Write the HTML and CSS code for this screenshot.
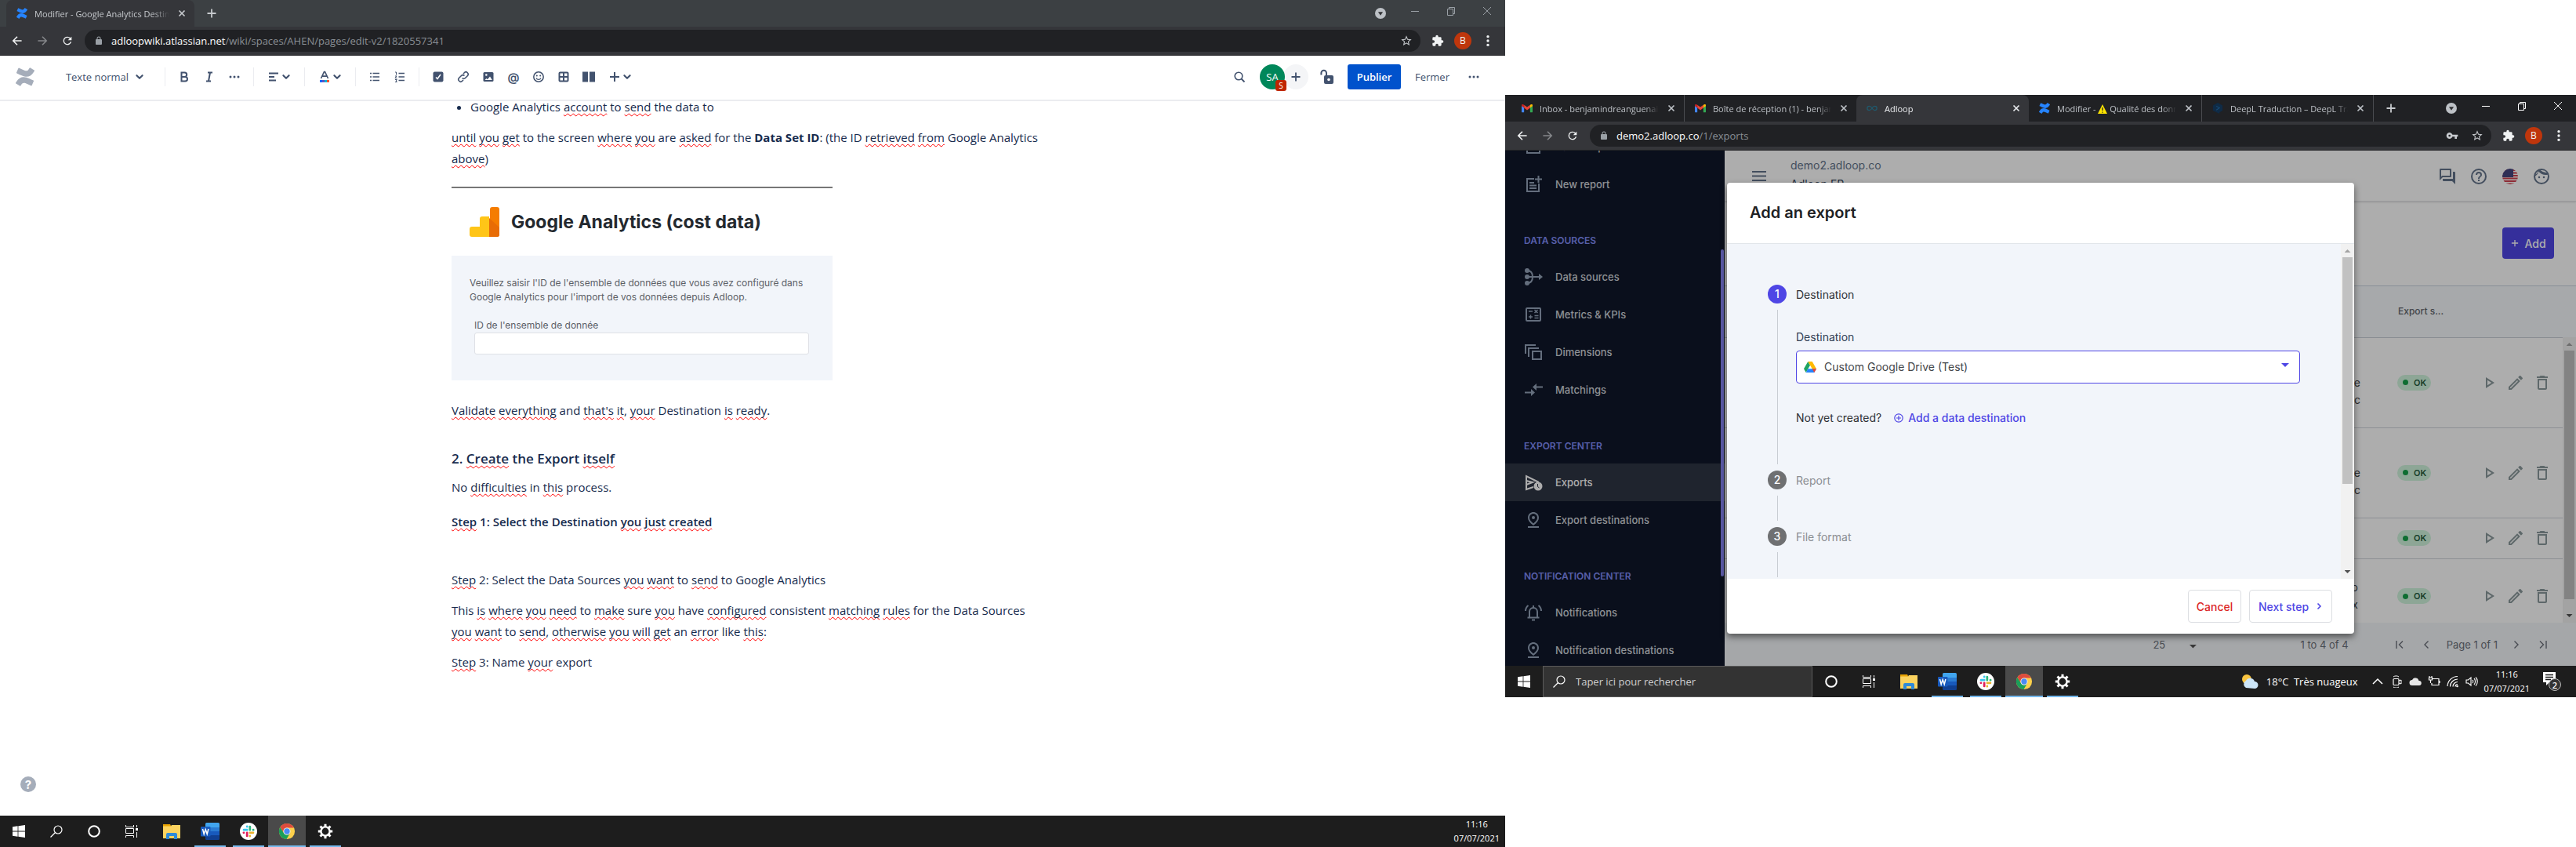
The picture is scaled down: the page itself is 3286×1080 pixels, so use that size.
FILE: index.html
```html
<!DOCTYPE html>
<html lang="fr">
<head>
<meta charset="utf-8">
<title>Bureau étendu</title>
<link rel="stylesheet" href="styles.css">
</head>
<body>
<svg class="defs" aria-hidden="true">
  <symbol id="confluence" viewBox="0 0 24 24"><path d="M.87 18.257c-.248.382-.53.875-.763 1.245a.764.764 0 0 0 .255 1.04l4.965 3.054a.764.764 0 0 0 1.058-.26c.199-.332.454-.763.733-1.221 1.967-3.247 3.945-2.853 7.508-1.146l4.957 2.337a.764.764 0 0 0 1.028-.382l2.364-5.346a.764.764 0 0 0-.382-1 599.851 599.851 0 0 1-4.965-2.361C10.911 10.97 5.224 11.185.87 18.257zM23.131 5.743c.249-.405.531-.875.764-1.25a.764.764 0 0 0-.256-1.034L18.675.404a.764.764 0 0 0-1.058.26c-.195.335-.451.763-.734 1.225-1.966 3.246-3.945 2.85-7.508 1.146L4.437.694a.764.764 0 0 0-1.027.382L1.046 6.422a.764.764 0 0 0 .382 1c1.039.49 3.105 1.467 4.965 2.361 6.698 3.246 12.392 3.029 16.738-4.04z"/></symbol>
  <symbol id="close" viewBox="0 0 16 16"><path d="M4.500 4.500l7 7m0-7l-7 7" fill="none" stroke="currentColor" stroke-width="1.700"/></symbol>
  <symbol id="plus" viewBox="0 0 16 16"><path d="M8 2.500v11M2.500 8h11" fill="none" stroke="currentColor" stroke-width="1.800"/></symbol>
  <symbol id="back" viewBox="0 0 20 20"><path d="M17 10H4m6-6.500L3.500 10l6.500 6.500" fill="none" stroke="currentColor" stroke-width="2"/></symbol>
  <symbol id="forward" viewBox="0 0 20 20"><path d="M3 10h13m-6-6.500l6.500 6.500-6.500 6.500" fill="none" stroke="currentColor" stroke-width="2"/></symbol>
  <symbol id="reload" viewBox="0 0 24 24"><path fill="currentColor" d="M17.650 6.350A7.960 7.960 0 0 0 12 4a8 8 0 1 0 7.730 10h-2.080A6 6 0 1 1 12 6c1.660 0 3.140.690 4.220 1.780L13 11h7V4z"/></symbol>
  <symbol id="lock" viewBox="0 0 24 24"><path fill="currentColor" d="M18 8h-1V6A5 5 0 0 0 7 6v2H6a2 2 0 0 0-2 2v10c0 1.100.9 2 2 2h12a2 2 0 0 0 2-2V10a2 2 0 0 0-2-2zM9 8V6a3 3 0 0 1 6 0v2z"/></symbol>
  <symbol id="star" viewBox="0 0 24 24"><path fill="currentColor" d="M22 9.240l-7.190-.620L12 2 9.190 8.630 2 9.240l5.460 4.730L5.820 21 12 17.270 18.180 21l-1.630-7.030L22 9.240zM12 15.400l-3.760 2.270 1-4.280-3.320-2.880 4.380-.380L12 6.100l1.710 4.040 4.380.380-3.320 2.880 1 4.280L12 15.400z"/></symbol>
  <symbol id="puzzle" viewBox="0 0 24 24"><path fill="currentColor" d="M20.500 11H19V7a2 2 0 0 0-2-2h-4V3.500a2.500 2.500 0 0 0-5 0V5H4a2 2 0 0 0-2 2v3.800h1.500a2.700 2.700 0 0 1 0 5.400H2V20c0 1.100.9 2 2 2h3.800v-1.500a2.700 2.700 0 0 1 5.400 0V22H17a2 2 0 0 0 2-2v-4h1.500a2.500 2.500 0 0 0 0-5z"/></symbol>
  <symbol id="key" viewBox="0 0 24 24"><path fill="currentColor" d="M12.650 10a6 6 0 1 0 0 4H17v4h4v-4h2v-4H12.650zM7 14a2 2 0 1 1 0-4 2 2 0 0 1 0 4z"/></symbol>
  <symbol id="kebab" viewBox="0 0 24 24"><g fill="currentColor"><circle cx="12" cy="4" r="2.500"/><circle cx="12" cy="12" r="2.500"/><circle cx="12" cy="20" r="2.500"/></g></symbol>
  <symbol id="dots" viewBox="0 0 16 16"><g fill="currentColor"><circle cx="3" cy="8" r="1.500"/><circle cx="8" cy="8" r="1.500"/><circle cx="13" cy="8" r="1.500"/></g></symbol>
  <symbol id="tabmenu" viewBox="0 0 16 16"><circle cx="8" cy="8" r="8" fill="currentColor"/><path d="M4.500 6h7L8 11z" fill="#303134"/></symbol>
  <symbol id="min" viewBox="0 0 12 12"><path d="M1 6.500h10" stroke="currentColor"/></symbol>
  <symbol id="restore" viewBox="0 0 12 12"><path d="M1.500 3.500h7v8h-7zM3.500 3.500v-2h7v8h-2" fill="none" stroke="currentColor"/></symbol>
  <symbol id="quit" viewBox="0 0 12 12"><path d="M1 1l10 10M11 1L1 11" stroke="currentColor"/></symbol>
  <symbol id="chev" viewBox="0 0 10 10"><path d="M2 3.500l3 3 3-3" fill="none" stroke="currentColor" stroke-width="1.800" stroke-linecap="round" stroke-linejoin="round"/></symbol>
  <symbol id="gmail" viewBox="0 0 16 12"><path fill="#4285f4" d="M0 2v9a1 1 0 0 0 1 1h2.600V4.800z"/><path fill="#34a853" d="M16 2v9a1 1 0 0 1-1 1h-2.600V4.800z"/><path fill="#ea4335" d="M3.600 5.500V1L8 4.300 12.400 1v4.500L8 8.800z"/><path fill="#c5221f" d="M0 1.800v1L3.600 5.500V1C2 0 0 0 0 1.800z"/><path fill="#fbbc04" d="M16 1.800v1l-3.600 2.700V1c1.600-1 3.600-1 3.600.8z"/></symbol>
  <symbol id="win" viewBox="0 0 16 16"><path fill="#fff" d="M0 2.200L6.600 1.300v6.300H0zM7.400 1.200L16 0v7.600H7.400zM0 8.400h6.600v6.300L0 13.800zM7.400 8.400H16V16l-8.600-1.200z"/></symbol>
  <symbol id="loupe" viewBox="0 0 16 16"><circle cx="10" cy="6" r="5" fill="none" stroke="#fff" stroke-width="1.200"/><path d="M6.500 9.500L.5 15.500" stroke="#fff" stroke-width="1.200"/></symbol>
  <symbol id="cortana" viewBox="0 0 16 16"><circle cx="8" cy="8" r="6.800" fill="none" stroke="#fff" stroke-width="2"/></symbol>
  <symbol id="taskview" viewBox="0 0 16 16"><path d="M.5 0v2.500h10V0M.5 16v-2.500h10V16M.5 4.500h10v6H.500zM14.500 0v3M14.500 9v7" fill="none" stroke="#fff"/><path d="M13 4h3v3h-3z" fill="#fff"/></symbol>
  <symbol id="explorer" viewBox="0 0 24 20"><path fill="#e8a302" d="M1 1h9l1 2v4H1z"/><path fill="#fbd35f" d="M1 3.500h10l1-1.500h11v17H1z"/><path fill="#2f8ad8" d="M5 20v-6a2 2 0 0 1 2-2h10a2 2 0 0 1 2 2v6h-4v-4H9v4z"/></symbol>
  <symbol id="word" viewBox="0 0 24 22"><path fill="#41a5ee" d="M6 1.500A1.500 1.500 0 0 1 7.500 0h15A1.500 1.500 0 0 1 24 1.500V6H6z"/><path fill="#2b7cd3" d="M6 6h18v5H6z"/><path fill="#185abd" d="M6 11h18v5H6z"/><path fill="#103f91" d="M6 16h18v4.500a1.500 1.500 0 0 1-1.500 1.500h-15A1.500 1.500 0 0 1 6 20.500z"/><rect y="5" width="12.500" height="12.500" rx="1" fill="#185abd"/><path d="M2.500 8l1.700 6.500L6.200 8.500l2 6L9.900 8" fill="none" stroke="#fff" stroke-width="1.500"/></symbol>
  <symbol id="slack" viewBox="0 0 24 24"><circle cx="12" cy="12" r="12" fill="#fff"/><g fill="none" stroke-width="3" stroke-linecap="round"><path d="M10 5.300v.2M5.500 10h4.500" stroke="#36c5f0"/><path d="M14 5.500V10M18.700 10h-.2" stroke="#2eb67d"/><path d="M14 18.700v-.2M14 14h4.500" stroke="#ecb22e"/><path d="M10 14v4.500M5.300 14h.2" stroke="#e01e5a"/></g></symbol>
  <symbol id="chrome" viewBox="0 0 24 24"><circle cx="12" cy="12" r="11" fill="#fdd04b"/><path fill="#dd4b3e" d="M2.500 6.400A11 11 0 0 1 21.600 7H12a5 5 0 0 0-4.500 7.200z"/><path fill="#1a9f5a" d="M2.500 6.400A11 11 0 0 0 11.500 23l4.900-8.600a5 5 0 0 1-8.900-.2z"/><circle cx="12" cy="12" r="5" fill="#f1f1f1"/><circle cx="12" cy="12" r="4" fill="#4a8af4"/></symbol>
  <symbol id="gear" viewBox="0 0 20 20"><circle cx="10" cy="10" r="5.600" fill="none" stroke="#fff" stroke-width="2.400"/><path d="M10 .8v3.400M10 15.800v3.400M.8 10h3.400M15.800 10h3.400M3.500 3.500l2.400 2.400M14.100 14.100l2.400 2.400M16.500 3.500l-2.400 2.400M5.900 14.100l-2.400 2.400" stroke="#fff" stroke-width="3"/></symbol>
  <symbol id="pin" viewBox="0 0 24 24"><path fill="currentColor" d="M12 4c1.930 0 5 1.400 5 5.150 0 2.160-1.720 4.670-5 7.320-3.280-2.650-5-5.170-5-7.320C7 5.400 10.070 4 12 4m0-2C8.730 2 5 4.460 5 9.150c0 3.120 2.330 6.410 7 9.850 4.670-3.440 7-6.730 7-9.850C19 4.460 15.270 2 12 2z"/><circle cx="12" cy="9" r="2" fill="currentColor"/><path fill="currentColor" d="M5 20h14v2H5z"/></symbol>
  <symbol id="play" viewBox="0 0 24 24"><path fill="currentColor" d="M10 8.640L15.270 12 10 15.360V8.640M8 5v14l11-7L8 5z"/></symbol>
  <symbol id="edit" viewBox="0 0 24 24"><path fill="currentColor" d="M14.060 9.020l.920.920L5.920 19H5v-.920l9.060-9.060M17.660 3c-.250 0-.510.100-.700.290l-1.830 1.830 3.750 3.750 1.830-1.830a1 1 0 0 0 0-1.410l-2.340-2.340c-.200-.200-.450-.290-.710-.290zm-3.600 3.190L3 17.250V21h3.750L17.810 9.940l-3.750-3.750z"/></symbol>
  <symbol id="trash" viewBox="0 0 24 24"><path fill="currentColor" d="M6 19c0 1.100.9 2 2 2h8c1.100 0 2-.9 2-2V7H6v12zM8 9h8v10H8V9zm7.500-5l-1-1h-5l-1 1H5v2h14V4h-3.500z"/></symbol>
</svg>

<div class="desk">

<section class="screen screen-left">
  <div class="chrome idle">
    <div class="tabs">
      <div class="tab active"><svg class="fav blue"><use href="#confluence"/></svg><span class="tab-title">Modifier - Google Analytics Destination</span><button class="tab-x" aria-label="Fermer l'onglet"><svg><use href="#close"/></svg></button></div>
      <button class="tab-new" aria-label="Nouvel onglet"><svg><use href="#plus"/></svg></button>
      <div class="win-controls">
        <button class="tab-menu" aria-label="Rechercher un onglet"><svg><use href="#tabmenu"/></svg></button>
        <button aria-label="Réduire"><svg><use href="#min"/></svg></button>
        <button aria-label="Restaurer"><svg><use href="#restore"/></svg></button>
        <button aria-label="Quitter"><svg><use href="#quit"/></svg></button>
      </div>
    </div>
    <div class="navbar">
      <button aria-label="Retour"><svg><use href="#back"/></svg></button>
      <button class="off" aria-label="Avancer"><svg><use href="#forward"/></svg></button>
      <button aria-label="Actualiser"><svg><use href="#reload"/></svg></button>
      <div class="url"><svg class="lock"><use href="#lock"/></svg><span class="addr"><b>adloopwiki.atlassian.net</b>/wiki/spaces/AHEN/pages/edit-v2/1820557341</span><svg class="mark"><use href="#star"/></svg></div>
      <button aria-label="Extensions"><svg><use href="#puzzle"/></svg></button>
      <button aria-label="Profil"><span class="profile">B</span></button>
      <button aria-label="Menu"><svg><use href="#kebab"/></svg></button>
    </div>
  </div>

  <header class="wiki-bar">
    <svg class="wiki-logo"><use href="#confluence"/></svg>
    <button class="style-pick">Texte normal <svg class="chev"><use href="#chev"/></svg></button>
    <i class="sep"></i>
    <button aria-label="Gras"><svg viewBox="0 0 16 16"><path d="M4.500 2.500h4a2.700 2.700 0 0 1 0 5.400h-4zm0 5.400h4.700a2.800 2.800 0 0 1 0 5.600H4.500z" fill="none" stroke="currentColor" stroke-width="2"/></svg></button>
    <button aria-label="Italique"><svg viewBox="0 0 16 16"><path d="M6 2.500h6M4 13.500h6M9 2.500L7 13.500" fill="none" stroke="currentColor" stroke-width="2"/></svg></button>
    <button aria-label="Plus de mises en forme"><svg><use href="#dots"/></svg></button>
    <i class="sep"></i>
    <button class="wide" aria-label="Alignement"><svg viewBox="0 0 16 16"><path d="M2 3.500h12M2 8h7M2 12.500h9" stroke="currentColor" stroke-width="2"/></svg><svg class="chev"><use href="#chev"/></svg></button>
    <i class="sep"></i>
    <button class="wide" aria-label="Couleur du texte"><svg viewBox="0 0 16 16"><path d="M3.500 10L7.500 1.500h1L12.500 10M5 7.200h6" fill="none" stroke="currentColor" stroke-width="1.700"/><path d="M2 12h3v3H2z" fill="#0065ff"/><path d="M5 12h3v3H5z" fill="#6554c0"/><path d="M8 12h3v3H8z" fill="#00b8d9"/><path d="M11 12h3v3h-3z" fill="#ff5630"/></svg><svg class="chev"><use href="#chev"/></svg></button>
    <i class="sep"></i>
    <button aria-label="Liste à puces"><svg viewBox="0 0 16 16"><path d="M5.500 3.500H14M5.500 8H14M5.500 12.500H14M2 3.500h2M2 8h2M2 12.500h2" stroke="currentColor" stroke-width="1.700"/></svg></button>
    <button aria-label="Liste numérotée"><svg viewBox="0 0 16 16"><path d="M6.500 3.500H14M6.500 8H14M6.500 12.500H14" stroke="currentColor" stroke-width="1.700"/><path d="M2 2h1.500v3.500M2 7h2L2 9.500h2.500M2 11.500h2.300l-1 1.500 1 1.500H2" fill="none" stroke="currentColor"/></svg></button>
    <i class="sep"></i>
    <button aria-label="Tâche"><svg viewBox="0 0 16 16"><rect x="1.500" y="1.500" width="13" height="13" rx="2" fill="currentColor"/><path d="M5 8.500l2 2L11 5" fill="none" stroke="#fff" stroke-width="1.500"/></svg></button>
    <button aria-label="Lien"><svg viewBox="0 0 16 16"><path d="M6.500 9.500a2.800 2.800 0 0 0 4 0l2.800-2.800a2.800 2.800 0 0 0-4-4L8 4M9.500 6.500a2.800 2.800 0 0 0-4 0L2.700 9.300a2.800 2.800 0 0 0 4 4L8 12" fill="none" stroke="currentColor" stroke-width="1.600"/></svg></button>
    <button aria-label="Image"><svg viewBox="0 0 16 16"><rect x="1.500" y="2" width="13" height="12" rx="1.500" fill="currentColor"/><circle cx="5.300" cy="5.500" r="1.300" fill="#fff"/><path d="M3.500 12l2-2 1.300 1.200L10 7.500l2.800 4.500z" fill="#fff"/></svg></button>
    <button class="at" aria-label="Mention">@</button>
    <button aria-label="Emoji"><svg viewBox="0 0 16 16"><circle cx="8" cy="8" r="6.200" fill="none" stroke="currentColor" stroke-width="1.500"/><circle cx="5.800" cy="6.500" r="1" fill="currentColor"/><circle cx="10.200" cy="6.500" r="1" fill="currentColor"/><path d="M5 9.500a3.300 3.300 0 0 0 6 0" fill="none" stroke="currentColor" stroke-width="1.300"/></svg></button>
    <button aria-label="Tableau"><svg viewBox="0 0 16 16"><rect x="2.500" y="2.500" width="11" height="11" rx="1" fill="none" stroke="currentColor" stroke-width="2"/><path d="M8 2.500v11M2.500 8h11" stroke="currentColor" stroke-width="2"/></svg></button>
    <button aria-label="Colonnes"><svg viewBox="0 0 16 16"><path d="M0 1.500h7v13H0zM9 1.500h7v13H9z" fill="currentColor"/></svg></button>
    <button class="wide" aria-label="Insérer"><svg viewBox="0 0 16 16"><path d="M8 2v12M2 8h12" stroke="currentColor" stroke-width="2"/></svg><svg class="chev"><use href="#chev"/></svg></button>
    <div class="wiki-right">
      <button aria-label="Rechercher"><svg viewBox="0 0 16 16"><circle cx="7" cy="7" r="4.800" fill="none" stroke="currentColor" stroke-width="1.600"/><path d="M10.500 10.500l4 4" stroke="currentColor" stroke-width="1.800"/></svg></button>
      <span class="avatar">SA<span class="avatar-badge">S</span></span><button class="invite" aria-label="Inviter"><svg><use href="#plus"/></svg></button>
      <button class="restrict" aria-label="Restrictions"><svg viewBox="0 0 20 20"><rect x="7" y="8" width="12" height="11" rx="2" fill="currentColor"/><circle cx="13" cy="13.500" r="1.800" fill="#fff"/><path d="M10 9V5a3.300 3.300 0 0 0-6.600 0v2.500" fill="none" stroke="currentColor" stroke-width="2"/></svg></button>
      <button class="publish">Publier</button>
      <button class="quit">Fermer</button>
      <button aria-label="Autres actions"><svg><use href="#dots"/></svg></button>
    </div>
  </header>

  <main class="doc">
    <ul><li>Google Analytics <u>account</u> to <u>send</u> the data to</li></ul>
    <p><u>until</u> <u>you</u> <u>get</u> to the screen <u>where</u> <u>you</u> are <u>asked</u> for the <b>Data Set ID</b>: (the ID <u>retrieved</u> <u>from</u> Google Analytics <u>above</u>)</p>
    <figure class="ga-card">
      <div class="ga-head">
        <svg viewBox="0 0 38 38"><path fill="#f57c00" d="M26 3a3 3 0 0 1 3-3h6a3 3 0 0 1 3 3v32a3 3 0 0 1-3 3h-9z"/><path fill="#ffc517" d="M13 15a3 3 0 0 1 3-3h9v26H3a3 3 0 0 1-3-3v-7a3 3 0 0 1 3-3h10z"/><path fill="#e86c06" d="M25 14l13 12v9a3 3 0 0 1-3 3H25z"/></svg>
        <strong>Google Analytics (cost data)</strong>
      </div>
      <div class="ga-body">
        <p>Veuillez saisir l'ID de l'ensemble de données que vous avez configuré dans Google Analytics pour l'import de vos données depuis Adloop.</p>
        <label for="dataset">ID de l'ensemble de donnée</label>
        <input id="dataset" type="text">
      </div>
    </figure>
    <p><u>Validate</u> <u>everything</u> and <u>that's</u> <u>it</u>, <u>your</u> Destination <u>is</u> <u>ready</u>.</p>
    <h2>2. <u>Create</u> the Export <u>itself</u></h2>
    <p>No <u>difficulties</u> in <u>this</u> process.</p>
    <h3><u>Step</u> 1: Select the Destination <u>you</u> <u>just</u> <u>created</u></h3>
    <p class="after-gap"><u>Step</u> 2: Select the Data Sources <u>you</u> <u>want</u> to <u>send</u> to Google Analytics</p>
    <p>This <u>is</u> <u>where</u> <u>you</u> <u>need</u> to <u>make</u> sure <u>you</u> have <u>configured</u> consistent <u>matching</u> <u>rules</u> for the Data Sources <u>you</u> <u>want</u> to <u>send</u>, <u>otherwise</u> <u>you</u> <u>will</u> <u>get</u> an <u>error</u> like <u>this</u>:</p>
    <p><u>Step</u> 3: Name <u>your</u> export</p>
  </main>
  <button class="help" aria-label="Aide">?</button>

  <footer class="taskbar">
    <button aria-label="Démarrer"><svg class="i16"><use href="#win"/></svg></button>
    <button aria-label="Rechercher"><svg class="i16"><use href="#loupe"/></svg></button>
    <button aria-label="Cortana"><svg class="i16"><use href="#cortana"/></svg></button>
    <button aria-label="Vue des tâches"><svg class="i16"><use href="#taskview"/></svg></button>
    <div class="apps">
      <button aria-label="Explorateur"><svg><use href="#explorer"/></svg></button>
      <button class="run" aria-label="Word"><svg><use href="#word"/></svg></button>
      <button class="run" aria-label="Slack"><svg><use href="#slack"/></svg></button>
      <button class="run front" aria-label="Chrome"><svg><use href="#chrome"/></svg></button>
      <button class="run" aria-label="Paramètres"><svg class="i20"><use href="#gear"/></svg></button>
    </div>
    <div class="tray"><time class="clock">11:16<br>07/07/2021</time></div>
  </footer>
</section>

<section class="screen screen-right">
  <div class="chrome">
    <div class="tabs">
      <div class="tab"><svg class="fav"><use href="#gmail"/></svg><span class="tab-title">Inbox - benjamindreanguenaire</span><button class="tab-x" aria-label="Fermer l'onglet"><svg><use href="#close"/></svg></button></div>
      <div class="tab split"><svg class="fav"><use href="#gmail"/></svg><span class="tab-title">Boîte de réception (1) - benjamin</span><button class="tab-x" aria-label="Fermer l'onglet"><svg><use href="#close"/></svg></button></div>
      <div class="tab active"><svg class="fav" viewBox="0 0 16 16"><path d="M8 8C6.500 5.500 5.500 5 4 5a3 3 0 0 0 0 6c1.500 0 2.500-.5 4-3s2.500-3 4-3a3 3 0 0 1 0 6c-1.500 0-2.500-.5-4-3z" fill="none" stroke="#1f5a6e" stroke-width="1.400"/></svg><span class="tab-title">Adloop</span><button class="tab-x" aria-label="Fermer l'onglet"><svg><use href="#close"/></svg></button></div>
      <div class="tab"><svg class="fav blue"><use href="#confluence"/></svg><span class="tab-title">Modifier - <svg class="warn" viewBox="0 0 12 12"><path d="M6 0l6 12H0z" fill="#ffe500"/><path d="M6 4v4M6 9.500v1.200" stroke="#202124" stroke-width="1.300"/></svg> Qualité des données</span><button class="tab-x" aria-label="Fermer l'onglet"><svg><use href="#close"/></svg></button></div>
      <div class="tab split last"><svg class="fav" viewBox="0 0 16 16"><path d="M8 0l7 4v7.500l-4.500 2.500V16L1 11.500V4z" fill="#0f2b46"/><path d="M6 5l4.500 2.500L6 10.500" fill="none" stroke="#174a75" stroke-width="1.300"/></svg><span class="tab-title">DeepL Traduction – DeepL Translate</span><button class="tab-x" aria-label="Fermer l'onglet"><svg><use href="#close"/></svg></button></div>
      <button class="tab-new" aria-label="Nouvel onglet"><svg><use href="#plus"/></svg></button>
      <div class="win-controls">
        <button class="tab-menu" aria-label="Rechercher un onglet"><svg><use href="#tabmenu"/></svg></button>
        <button aria-label="Réduire"><svg><use href="#min"/></svg></button>
        <button aria-label="Restaurer"><svg><use href="#restore"/></svg></button>
        <button aria-label="Quitter"><svg><use href="#quit"/></svg></button>
      </div>
    </div>
    <div class="navbar">
      <button aria-label="Retour"><svg><use href="#back"/></svg></button>
      <button class="off" aria-label="Avancer"><svg><use href="#forward"/></svg></button>
      <button aria-label="Actualiser"><svg><use href="#reload"/></svg></button>
      <div class="url"><svg class="lock"><use href="#lock"/></svg><span class="addr"><b>demo2.adloop.co</b>/1/exports</span><svg class="mark"><use href="#key"/></svg><svg class="mark"><use href="#star"/></svg></div>
      <button aria-label="Extensions"><svg><use href="#puzzle"/></svg></button>
      <button aria-label="Profil"><span class="profile">B</span></button>
      <button aria-label="Menu"><svg><use href="#kebab"/></svg></button>
    </div>
  </div>

  <div class="app">
    <nav class="side">
      <div class="side-list">
        <a href="#saved"><svg viewBox="0 0 24 24"><path d="M4 4h16v16H4z" fill="none" stroke="currentColor" stroke-width="2"/></svg>Saved reports</a>
        <a href="#new"><svg viewBox="0 0 24 24"><path d="M13 5H4v16h15V11M7 10h6M7 13.500h9M7 17h9M18.500 1v9M14 5.500h9" fill="none" stroke="currentColor" stroke-width="2"/></svg>New report</a>
        <h4>DATA SOURCES</h4>
        <a href="#sources"><svg viewBox="0 0 24 24"><g fill="currentColor"><circle cx="4" cy="4" r="3"/><circle cx="4" cy="12" r="3"/><circle cx="4" cy="20" r="3"/><path d="M19 8l5 4-5 4z"/></g><path d="M4 4c5 0 7 3 7 8s-2 8-7 8M4 12h16" fill="none" stroke="currentColor" stroke-width="2"/></svg>Data sources</a>
        <a href="#metrics"><svg viewBox="0 0 24 24"><rect x="3" y="4" width="18" height="16" rx="1" fill="none" stroke="currentColor" stroke-width="2"/><path d="M6 8h5M13.500 6l4 4m0-4l-4 4M6 15h5M8.500 12.500v5M13.500 13.500h5M13.500 16.500h5" stroke="currentColor" stroke-width="1.500"/></svg>Metrics &amp; KPIs</a>
        <a href="#dimensions"><svg viewBox="0 0 24 24"><path d="M2 14V3h13M6 18V7h13M11 11h11v10H11z" fill="none" stroke="currentColor" stroke-width="2"/></svg>Dimensions</a>
        <a href="#matchings"><svg viewBox="0 0 24 24"><g fill="currentColor"><path d="M9 11l5 4.500L9 20v-3.500H1v-2h8z"/><path d="M16 4l-5 4.500 5 4.500V9.500h8v-2h-8z"/></g></svg>Matchings</a>
        <h4>EXPORT CENTER</h4>
        <a class="on" href="#exports"><svg viewBox="0 0 24 24"><path d="M12 18L3 21V4l16 8M3 10l8 2-8 3" fill="none" stroke="currentColor" stroke-width="2"/><circle cx="18" cy="17" r="5.500" fill="currentColor"/><path d="M17.500 14v3.500l2 1.500" fill="none" stroke="#2b3345"/></svg>Exports</a>
        <a href="#destinations"><svg><use href="#pin"/></svg>Export destinations</a>
        <h4>NOTIFICATION CENTER</h4>
        <a href="#notifications"><svg viewBox="0 0 24 24"><path d="M7 18v-7a5 5 0 0 1 10 0v7M4.500 18.500h15M12 3v3M5.500 3A9 9 0 0 0 2 10M18.500 3A9 9 0 0 1 22 10M10 21.500h4" fill="none" stroke="currentColor" stroke-width="2"/></svg>Notifications</a>
        <a href="#notif-destinations"><svg><use href="#pin"/></svg>Notification destinations</a>
      </div>
      <i class="side-thumb"></i>
    </nav>

    <div class="content">
      <header class="app-head">
        <button aria-label="Menu"><svg viewBox="0 0 20 20"><path d="M1 4h18M1 9.500h18M1 15h18" stroke="currentColor" stroke-width="2"/></svg></button>
        <div class="site"><span>demo2.adloop.co</span><strong>Adloop FR</strong></div>
        <div class="head-icons">
          <button aria-label="Discussion"><svg viewBox="0 0 24 24"><path fill="currentColor" d="M15 4v7H5.170L4 12.170V4h11m1-2H3a1 1 0 0 0-1 1v14l4-4h10a1 1 0 0 0 1-1V3a1 1 0 0 0-1-1zm5 4h-2v9H6v2a1 1 0 0 0 1 1h11l4 4V7a1 1 0 0 0-1-1z"/></svg></button>
          <button aria-label="Aide"><svg viewBox="0 0 24 24"><path fill="currentColor" d="M11 18h2v-2h-2v2zm1-16a10 10 0 1 0 0 20 10 10 0 0 0 0-20zm0 18a8 8 0 1 1 0-16 8 8 0 0 1 0 16zm0-14a4 4 0 0 0-4 4h2a2 2 0 1 1 4 0c0 2-3 1.750-3 5h2c0-2.250 3-2.500 3-5a4 4 0 0 0-4-4z"/></svg></button>
          <button aria-label="Langue"><svg viewBox="-2 -2 24 24"><clipPath id="disc"><circle cx="10" cy="10" r="10"/></clipPath><g clip-path="url(#disc)"><path fill="#fff" d="M0 0h20v20H0z"/><path d="M0 2h20M0 5.500h20M0 9h20M0 12.500h20M0 16h20M0 19.500h20" stroke="#d0404e" stroke-width="1.800"/><path fill="#46467f" d="M0 0h14v11H0z"/></g></svg></button>
          <button aria-label="Compte"><svg viewBox="0 0 24 24"><path fill="currentColor" d="M10.250 13a1.250 1.250 0 1 1-2.500 0 1.250 1.250 0 0 1 2.500 0zM15 11.750a1.250 1.250 0 1 0 0 2.500 1.250 1.250 0 0 0 0-2.500zM22 12a10 10 0 1 1-20 0 10 10 0 0 1 20 0zM10.660 4.120A9.900 9.900 0 0 0 17.500 7c.460 0 .910-.050 1.340-.120A8 8 0 0 0 12 4c-.460 0-.910.050-1.340.120zM4.420 9.470a8.050 8.050 0 0 0 3.660-4.440 8.040 8.040 0 0 0-3.660 4.440zM20 12c0-.780-.120-1.530-.330-2.240-.700.150-1.420.240-2.170.240a12 12 0 0 1-9.150-4.250A10 10 0 0 1 4 11.860V12a8 8 0 0 0 16 0z"/></svg></button>
        </div>
      </header>
      <div class="page-actions"><button class="add"><svg><use href="#plus"/></svg>Add</button></div>
      <div class="table-wrap">
        <table>
          <thead><tr><th>Export</th><th>Export s...</th><th></th></tr></thead>
          <tbody>
            <tr class="tall"><td><span class="lead">Custom</span><br>Drive<br>xlsc</td><td><span class="ok">OK</span></td><td><div class="acts"><button aria-label="Run"><svg><use href="#play"/></svg></button><button aria-label="Edit"><svg><use href="#edit"/></svg></button><button aria-label="Delete"><svg><use href="#trash"/></svg></button></div></td></tr>
            <tr class="tall"><td><span class="lead">Custom</span><br>Drive<br>xlsc</td><td><span class="ok">OK</span></td><td><div class="acts"><button aria-label="Run"><svg><use href="#play"/></svg></button><button aria-label="Edit"><svg><use href="#edit"/></svg></button><button aria-label="Delete"><svg><use href="#trash"/></svg></button></div></td></tr>
            <tr class="short"><td></td><td><span class="ok">OK</span></td><td><div class="acts"><button aria-label="Run"><svg><use href="#play"/></svg></button><button aria-label="Edit"><svg><use href="#edit"/></svg></button><button aria-label="Delete"><svg><use href="#trash"/></svg></button></div></td></tr>
            <tr class="mid"><td class="near">Adloo<br>xlsx</td><td><span class="ok">OK</span></td><td><div class="acts"><button aria-label="Run"><svg><use href="#play"/></svg></button><button aria-label="Edit"><svg><use href="#edit"/></svg></button><button aria-label="Delete"><svg><use href="#trash"/></svg></button></div></td></tr>
          </tbody>
        </table>
        <div class="vbar"><i class="up"></i><i class="thumb"></i><i class="down"></i></div>
      </div>
      <div class="pager">
        <span class="per-page"><select aria-label="Rows per page"><option>25</option></select></span>
        <span class="count">1 to 4 of 4</span>
        <button aria-label="First"><svg viewBox="0 0 16 16"><path d="M4 3v10M12 3.500L7.500 8l4.500 4.500" fill="none" stroke="currentColor" stroke-width="1.400"/></svg></button>
        <button aria-label="Previous"><svg viewBox="0 0 16 16"><path d="M10.500 3.500L6 8l4.500 4.500" fill="none" stroke="currentColor" stroke-width="1.400"/></svg></button>
        <span class="page">Page 1 of 1</span>
        <button aria-label="Next"><svg viewBox="0 0 16 16"><path d="M5.500 3.500L10 8l-4.500 4.500" fill="none" stroke="currentColor" stroke-width="1.400"/></svg></button>
        <button aria-label="Last"><svg viewBox="0 0 16 16"><path d="M4 3.500L8.500 8 4 12.500M12 3v10" fill="none" stroke="currentColor" stroke-width="1.400"/></svg></button>
      </div>
    </div>

    <div class="scrim">
      <form class="modal">
        <h1>Add an export</h1>
        <div class="modal-body">
          <ol class="steps">
            <li class="current"><span class="num">1</span>
              <div class="step-body">
                <h5>Destination</h5>
                <label for="dest">Destination</label>
                <div class="dest-field">
                  <svg viewBox="0 0 16 14"><path fill="#1ea362" d="M5.300 0L0 9.300 2.700 14 8 4.700z"/><path fill="#ffba00" d="M5.300 0h5.400L16 9.300h-5.300z"/><path fill="#2684fc" d="M2.700 14l2.600-4.700H16L13.300 14z"/><path fill="#ea4335" d="M10.700 9.300H16L13.300 14z"/></svg>
                  <select id="dest"><option>Custom Google Drive (Test)</option></select>
                </div>
                <div class="hint">Not yet created?<a href="#add-destination"><svg viewBox="0 0 12 12"><circle cx="6" cy="6" r="5.200" fill="none" stroke="currentColor" stroke-width="1.200"/><path d="M6 3v6M3 6h6" stroke="currentColor" stroke-width="1.200"/></svg>Add a data destination</a></div>
              </div>
            </li>
            <li><span class="num">2</span><div class="step-body"><h5>Report</h5></div></li>
            <li><span class="num">3</span><div class="step-body"><h5>File format</h5></div></li>
          </ol>
          <div class="vbar light"><i class="up"></i><i class="thumb"></i><i class="down"></i></div>
        </div>
        <div class="modal-foot">
          <button type="button" class="cancel">Cancel</button>
          <button type="button" class="next">Next step<svg viewBox="0 0 10 10"><path d="M3.500 1.500L7 5 3.500 8.500" fill="none" stroke="currentColor" stroke-width="1.600"/></svg></button>
        </div>
      </form>
    </div>
  </div>

  <footer class="taskbar">
    <button aria-label="Démarrer"><svg class="i16"><use href="#win"/></svg></button>
    <label class="find"><svg class="i16"><use href="#loupe"/></svg><input type="text" placeholder="Taper ici pour rechercher" aria-label="Taper ici pour rechercher"></label>
    <button aria-label="Cortana"><svg class="i16"><use href="#cortana"/></svg></button>
    <button aria-label="Vue des tâches"><svg class="i16"><use href="#taskview"/></svg></button>
    <div class="apps">
      <button aria-label="Explorateur"><svg><use href="#explorer"/></svg></button>
      <button class="run" aria-label="Word"><svg><use href="#word"/></svg></button>
      <button class="run" aria-label="Slack"><svg><use href="#slack"/></svg></button>
      <button class="run front" aria-label="Chrome"><svg><use href="#chrome"/></svg></button>
      <button class="run" aria-label="Paramètres"><svg class="i20"><use href="#gear"/></svg></button>
    </div>
    <div class="tray">
      <svg class="weather" viewBox="0 0 22 22"><circle cx="7" cy="8" r="6" fill="#f9c440"/><path d="M6 19a5 5 0 0 1 0-9 6 6 0 0 1 11 1 4.300 4.300 0 0 1 0 9z" fill="#cde6f8"/></svg>
      <span class="meteo">18°C&ensp;Très nuageux</span>
      <svg class="ti" viewBox="0 0 16 16"><path d="M2 11l6-6 6 6" fill="none" stroke="#fff" stroke-width="1.500"/></svg>
      <svg class="ti" viewBox="0 0 16 16"><rect x="4" y="4.500" width="7" height="8" rx="1" fill="none" stroke="#fff" stroke-width="1.200"/><path d="M11 7l3-1v5l-3-1M4 2c2-1.500 5-1.500 7 0M4 15c2 1.500 5 1.500 7 0" fill="none" stroke="#fff"/></svg>
      <svg class="ti" viewBox="0 0 16 16"><path d="M4 13a3.500 3.500 0 0 1 0-7 4.500 4.500 0 0 1 8.500 1 3 3 0 0 1 .5 6z" fill="#e6e6e6"/></svg>
      <svg class="ti" viewBox="0 0 16 16"><path d="M6 4.500h8v8H5V10M15 7v3M1 3h5M2 1v2M5 1v2M1.500 3v3h4V3M3.500 6v4" fill="none" stroke="#fff" stroke-width="1.200"/></svg>
      <svg class="ti" viewBox="0 0 16 16"><path d="M1 14A13 13 0 0 1 14 1.500M4.500 14.500A9.500 9.500 0 0 1 14 5M8 14.500A6 6 0 0 1 14 8.500M11 14.500a3 3 0 0 1 3-3" fill="none" stroke="#fff" stroke-width="1.200"/><circle cx="13.500" cy="14" r="1.300" fill="#fff"/></svg>
      <svg class="ti" viewBox="0 0 16 16"><path d="M1 6h2.500L7 3v10L3.500 10H1zM9 6c1 1 1 3 0 4M11 4c2 2 2 6 0 8M13 2.500c3 3 3 8 0 11" fill="none" stroke="#fff" stroke-width="1.100"/></svg>
      <time class="clock">11:16<br>07/07/2021</time>
      <button class="inbox" aria-label="Notifications"><svg viewBox="0 0 26 26"><path d="M2 1h16v13H10l-4 4v-4H2z" fill="#fff"/><path d="M5 4.500h10M5 7.500h10M5 10.500h7" stroke="#1d1d1d" stroke-width="1.300"/><circle cx="17" cy="17" r="7.500" fill="#333" stroke="#bbb"/></svg><span class="inbox-count">2</span></button>
    </div>
  </footer>
</section>
</div>
</body>
</html>
```
FILE: styles.css
```css
* { box-sizing: border-box; }
body { margin: 0; background: #fff; font-family: "Open Sans", "Noto Sans", sans-serif; font-size: 12px; }
button { border: 0; padding: 0; background: none; color: inherit; font: inherit; display: flex; align-items: center; justify-content: center; cursor: pointer; }
a { color: inherit; text-decoration: none; }
svg { display: block; flex: none; }
.defs { position: absolute; width: 0; height: 0; }

.desk { display: flex; align-items: flex-start; min-height: 100vh; }
.screen { display: flex; flex-direction: column; min-width: 0; }
.screen-left { flex: 1920 1 0; min-height: 100vh; position: relative; }
.screen-right { flex: 1366 1 0; margin-top: 121px; }

/* Browser frame */
.tabs { display: flex; height: 34px; padding-left: 8px; background: #202124; color: #bdc1c6; font-size: 11px; }
.idle .tabs { background: #3c4043; color: #9aa0a6; }
.tab { display: flex; align-items: center; width: 220px; padding: 0 8px 0 12px; gap: 8px; min-width: 0; }
.idle .tab { width: 240px; }
.tab.active { background: #35363a; border-radius: 8px 8px 0 0; color: #e8eaed; }
.idle .tab.active { color: #c6c9cd; }
.tab.split { border-left: 1px solid #4a4c50; }
.tab.last { border-right: 1px solid #4a4c50; }
.fav { width: 16px; height: 16px; padding: 1px; }
.blue { fill: #2684ff; }
.tab-title { flex: 1; overflow: hidden; white-space: nowrap; mask-image: linear-gradient(90deg, #000 88%, transparent); }
.warn { display: inline-block; width: 12px; height: 12px; vertical-align: -2px; }
.tab-x svg, .tab-new svg { width: 16px; height: 16px; }
.tab-new { width: 28px; margin-left: 8px; color: #c6c9cd; }
.win-controls { display: flex; margin-left: auto; color: #fff; height: 28px; }
.idle .win-controls { color: #9aa0a6; }
.win-controls button { width: 46px; }
.win-controls svg { width: 12px; height: 12px; }
.win-controls .tab-menu { width: 24px; height: 34px; margin-right: 9px; color: #bdc1c6; }
.win-controls .tab-menu svg { width: 14px; height: 14px; }
.navbar { display: flex; align-items: center; height: 37px; padding: 0 6px; background: #35363a; border-bottom: 1px solid #232427; color: #f1f3f4; }
.navbar > button { width: 32px; height: 28px; }
.navbar > button svg { width: 16px; height: 16px; }
.navbar .off { color: #85878a; }
.url { flex: 1; min-width: 0; height: 28px; margin: 0 6px; padding: 0 8px 0 12px; display: flex; align-items: center; gap: 12px; background: #202124; border-radius: 14px; color: #9aa0a6; }
.lock { width: 12px; height: 14px; }
.addr { flex: 1; margin-left: -2px; font-size: 13px; color: #8a8f94; white-space: nowrap; overflow: hidden; }
.addr b { font-weight: 400; color: #fff; }
.mark { width: 20px; height: 16px; color: #c6c9cd; }
.profile { width: 22px; height: 22px; border-radius: 50%; background: #bf360c; line-height: 22px; text-align: center; }

/* Wiki editor */
.wiki-bar { display: flex; align-items: center; height: 58px; padding: 0 24px 2px 20px; border-bottom: 2px solid #ebecf0; color: #42526e; }
.wiki-logo { width: 24px; height: 24px; fill: #a5adba; }
.wiki-bar button { width: 32px; height: 32px; }
.wiki-bar button svg { width: 16px; height: 16px; }
.wiki-bar button .chev { width: 12px; height: 12px; }
.wiki-bar .style-pick { width: 120px; margin: 0 8px 0 30px; font-size: 13px; gap: 8px; }
.wiki-bar .wide { width: 48px; gap: 2px; }
.wiki-bar .at { font: 600 15px Inter, sans-serif; }
.sep { width: 1px; height: 24px; margin: 0 8px; background: #ebecf0; }
.wiki-right { display: flex; align-items: center; margin-left: auto; font-size: 13px; }
.avatar { position: relative; width: 32px; height: 32px; margin-left: 10px; border-radius: 50%; background: #00875a; color: #fff; line-height: 32px; text-align: center; z-index: 1; }
.avatar-badge { position: absolute; right: -2px; bottom: -2px; width: 14px; height: 14px; border-radius: 3px; background: #bf2600; font-size: 10px; line-height: 14px; }
.wiki-bar .invite { margin-left: -2px; border-radius: 50%; background: #f4f5f7; }
.wiki-bar .restrict { margin-left: 7px; }
.wiki-bar .restrict svg { width: 20px; height: 20px; }
.wiki-bar .publish { width: 68px; margin-left: 11px; border-radius: 3px; background: #0052cc; color: #fff; font-weight: 600; }
.wiki-bar .quit { width: 74px; margin-left: 3px; }

.doc { flex: 1; overflow: hidden; padding-left: 30%; color: #172b4d; font-size: 15px; line-height: 27px; }
.doc > * { max-width: 760px; margin: 12px 0 0; }
.doc ul { margin-top: -6px; padding-left: 24px; }
.doc h2 { margin-top: 34px; font-size: 17px; line-height: 27px; font-weight: 600; }
.doc h2 + p { margin-top: 10px; }
.doc h3 { margin-top: 17px; font-size: 15px; font-weight: 600; }
.doc .after-gap { margin-top: 47px; }
.doc u { text-decoration: underline wavy #f00 1px; text-decoration-skip-ink: none; text-underline-offset: 2px; }
.doc .ga-card { width: 486px; margin: 22px 0 25px; border-top: 2px solid #777; font-family: Inter, sans-serif; }
.ga-head { display: flex; align-items: center; gap: 15px; height: 86px; padding: 0 23px; color: #24292f; }
.ga-head svg { width: 38px; height: 38px; }
.ga-head strong { font-size: 23px; font-weight: 700; }
.ga-body { height: 159px; padding: 26px 23px; background: #f2f5fa; color: #5c6066; font-size: 12px; line-height: 18px; }
.ga-body p { margin: 0 0 18px; }
.ga-body label { display: block; padding-left: 6px; }
.ga-body input { display: block; width: 427px; height: 28px; margin-left: 6px; border: 1px solid #dfe1e6; border-radius: 3px; background: #fff; }
.help { position: absolute; left: 26px; bottom: 70px; width: 20px; height: 20px; border-radius: 50%; background: #a5adba; color: #fff; font: 700 15px Inter, sans-serif; }

/* Windows taskbar */
.taskbar { display: flex; height: 40px; background: #1d1d1d; color: #fff; }
.taskbar button { width: 48px; height: 40px; }
.taskbar .i16 { width: 16px; height: 16px; }
.taskbar .i20 { width: 20px; height: 20px; }
.apps { display: flex; gap: 1px; margin-left: 3px; }
.apps svg { width: 24px; height: 22px; }
.apps .run { background: linear-gradient(#76b9ed, #76b9ed) center bottom / 40px 2px no-repeat; }
.apps .front { background: linear-gradient(#76b9ed, #76b9ed) center bottom / 48px 2px no-repeat, #4a4a4a; }
.tray { display: flex; align-items: center; margin-left: auto; padding-right: 7px; }
.clock { font-size: 11px; line-height: 18px; text-align: center; }
.find { display: flex; align-items: center; gap: 13px; width: 344px; padding-left: 12px; background: #333; border: 1px solid #5a5a5a; }
.find input { flex: 1; min-width: 0; border: 0; outline: 0; background: none; color: #fff; font: 13px "Open Sans", sans-serif; padding: 0; }
.find input::placeholder { color: #d0d0d0; }
.weather { width: 22px; height: 22px; margin-right: 10px; }
.meteo { font-size: 13px; margin-right: 17px; white-space: nowrap; }
.ti { width: 16px; height: 16px; margin-right: 8px; }
.taskbar .inbox { position: relative; width: 26px; margin-left: 15px; margin-right: 11px; }
.inbox svg { width: 26px; height: 26px; }
.inbox-count { position: absolute; right: 6px; bottom: 6px; line-height: 18px; font-size: 11px; font-weight: 600; }

/* Adloop application */
.app { display: flex; position: relative; overflow: hidden; height: 657px; font-family: Inter, sans-serif; }
.side { position: relative; width: 280px; flex: none; background: #0f172a; color: #d1d5db; overflow: hidden; }
.side-list { margin-top: -29px; }
.side a { display: flex; align-items: center; height: 48px; padding-left: 24px; gap: 16px; font-size: 13px; font-weight: 500; }
.side svg { width: 24px; height: 24px; color: #94a3b8; }
.side .on { background: #2f3545; color: #fff; }
.side .on svg { color: #fff; }
.side h4 { margin: 0; padding: 38px 0 12px 24px; font-size: 12px; line-height: 20px; font-weight: 600; color: #818cf8; }
.side-thumb { position: absolute; right: 1px; top: 126px; width: 4px; height: 417px; border-radius: 2px; background: #8583f5; }
.content { flex: 1; min-width: 0; display: flex; flex-direction: column; }
.app-head { display: flex; align-items: flex-start; height: 65px; padding: 7px 32px 0 34px; border-bottom: 1px solid #e2e4e8; box-shadow: 0 1px 2px #0002; color: #64748b; }
.app-head > button { margin-top: 16px; }
.app-head > button svg { width: 20px; height: 20px; }
.site { display: flex; flex-direction: column; margin-left: 30px; font-size: 14px; line-height: 24px; }
.site strong { font-weight: 400; color: #334155; }
.head-icons { display: flex; gap: 16px; margin: 14px 0 0 auto; }
.head-icons svg { width: 24px; height: 24px; }
.page-actions { display: flex; justify-content: flex-end; height: 107px; padding: 33px 28px; }
.add { width: 66px; height: 40px; gap: 6px; border-radius: 4px; background: #4f46e5; color: #fff; font-size: 14px; font-weight: 500; }
.add svg { width: 12px; height: 12px; }
.table-wrap { position: relative; height: 430px; overflow: hidden; border-top: 1px solid #cbd5e1; }
table { width: 100%; border-collapse: collapse; table-layout: fixed; font-size: 14px; line-height: 22px; color: #3c4043; }
th { height: 65px; padding: 0 0 0 16px; background: #f7f9fc; border-bottom: 1px solid #cbd0d8; color: #64686e; font-size: 12px; font-weight: 500; text-align: left; }
th:nth-child(2) { width: 110px; }
th:nth-child(3) { width: 133px; }
td { padding: 0 0 0 15px; border-bottom: 1px solid #d0d4da; }
td:first-child { padding-right: 32px; text-align: right; }
td.near { padding-right: 35px; }
td:last-child { padding-left: 10px; }
.lead { padding-right: 16px; }
.tall { height: 115px; }
.short { height: 52px; }
.mid { height: 96px; }
.ok { display: flex; align-items: center; gap: 7px; width: 43px; height: 20px; padding-left: 7px; border-radius: 10px; background: #d0f5de; color: #1f5b3a; font-size: 11px; font-weight: 600; }
.ok::before { content: ""; width: 7px; height: 7px; border-radius: 50%; background: #16a34a; }
.acts { display: flex; gap: 10px; color: #8b9a9c; }
.acts svg { width: 24px; height: 24px; }
.vbar { position: absolute; right: 0; top: 65px; bottom: 0; width: 17px; display: flex; flex-direction: column; align-items: center; background: #f1f1f1; }
.vbar i { flex: none; }
.up, .down { width: 8px; height: 4px; background: #505050; }
.up { margin: 7px 0 6px; background: #a3a3a3; clip-path: polygon(50% 0, 100% 100%, 0 100%); }
.down { margin-top: auto; margin-bottom: 7px; clip-path: polygon(0 0, 100% 0, 50% 100%); }
.thumb { width: 13px; height: 87%; background: #c1c1c1; }
.light { top: 0; }
.light .thumb { height: 289px; }
.pager { flex: 1; display: flex; align-items: center; justify-content: flex-end; padding-right: 34px; background: #f4f6fa; color: #6b7079; font-size: 13px; }
.per-page { position: relative; width: 56px; margin-right: 132px; }
.per-page select { width: 100%; padding: 0; appearance: none; border: 0; background: none; font: inherit; color: inherit; }
.per-page::after { content: ""; position: absolute; right: 0; top: 8px; width: 10px; height: 5px; background: #555; clip-path: polygon(0 0, 100% 0, 50% 100%); }
.pager svg { width: 16px; height: 16px; }
.count { margin-right: 57px; }
.pager button + button { margin-left: 18px; }
.page { margin: 0 16px 0 18px; }

.scrim { position: absolute; inset: 0; display: flex; align-items: center; justify-content: center; background: rgba(0, 0, 0, .32); }
.modal { display: flex; flex-direction: column; width: 800px; height: 575px; border-radius: 4px; overflow: hidden; background: #fff; box-shadow: 0 4px 8px rgba(0, 0, 0, .5); }
.modal h1 { margin: 0; padding: 0 29px; line-height: 77px; border-bottom: 1px solid #e2e6ea; font-size: 20px; font-weight: 600; color: #202124; }
.modal-body { position: relative; flex: 1; overflow: hidden; padding: 52px 69px 0 52px; background: #f2f5fa; color: #303236; font-size: 14px; }
.steps { margin: 0; padding: 0; list-style: none; }
.steps li { position: relative; display: flex; gap: 12px; min-height: 72px; color: #8b8e93; }
.steps li::before { content: ""; position: absolute; left: 12px; top: 32px; bottom: 8px; width: 1px; background: #c8ccd2; }
.steps .current { min-height: 237px; color: #303236; }
.num { width: 24px; height: 24px; border-radius: 50%; background: #6f7072; color: #fff; line-height: 24px; text-align: center; font-weight: 500; }
.current .num { background: #4f46e5; }
.step-body { flex: 1; padding-top: 2px; line-height: 22px; }
.step-body h5 { margin: 0; font-size: 14px; font-weight: 400; }
.step-body label { display: block; margin-top: 32px; color: #334155; }
.dest-field { position: relative; margin-top: 6px; }
.dest-field svg { position: absolute; left: 10px; top: 14px; width: 16px; height: 14px; }
.dest-field::after { content: ""; position: absolute; right: 14px; top: 16px; width: 10px; height: 5px; background: #4f46e5; clip-path: polygon(0 0, 100% 0, 50% 100%); }
.dest-field select { display: block; width: 100%; height: 42px; padding: 0 35px 2px; appearance: none; border: 1px solid #4f46e5; border-radius: 4px; background: #fff; color: #44474b; font: 14px Inter, sans-serif; }
.hint { display: flex; align-items: center; gap: 16px; margin-top: 33px; }
.hint a { display: flex; align-items: center; gap: 6px; color: #4f46e5; font-weight: 500; }
.hint svg { width: 12px; height: 12px; }
.modal-foot { display: flex; justify-content: flex-end; gap: 10px; height: 70px; padding: 14px 28px; }
.modal-foot button { height: 42px; border: 1px solid #dcdee2; border-radius: 4px; font-size: 14px; font-weight: 500; }
.cancel { width: 68px; color: #dc2626; }
.next { width: 106px; gap: 8px; color: #4f46e5; }
.next svg { width: 10px; height: 10px; }
```
